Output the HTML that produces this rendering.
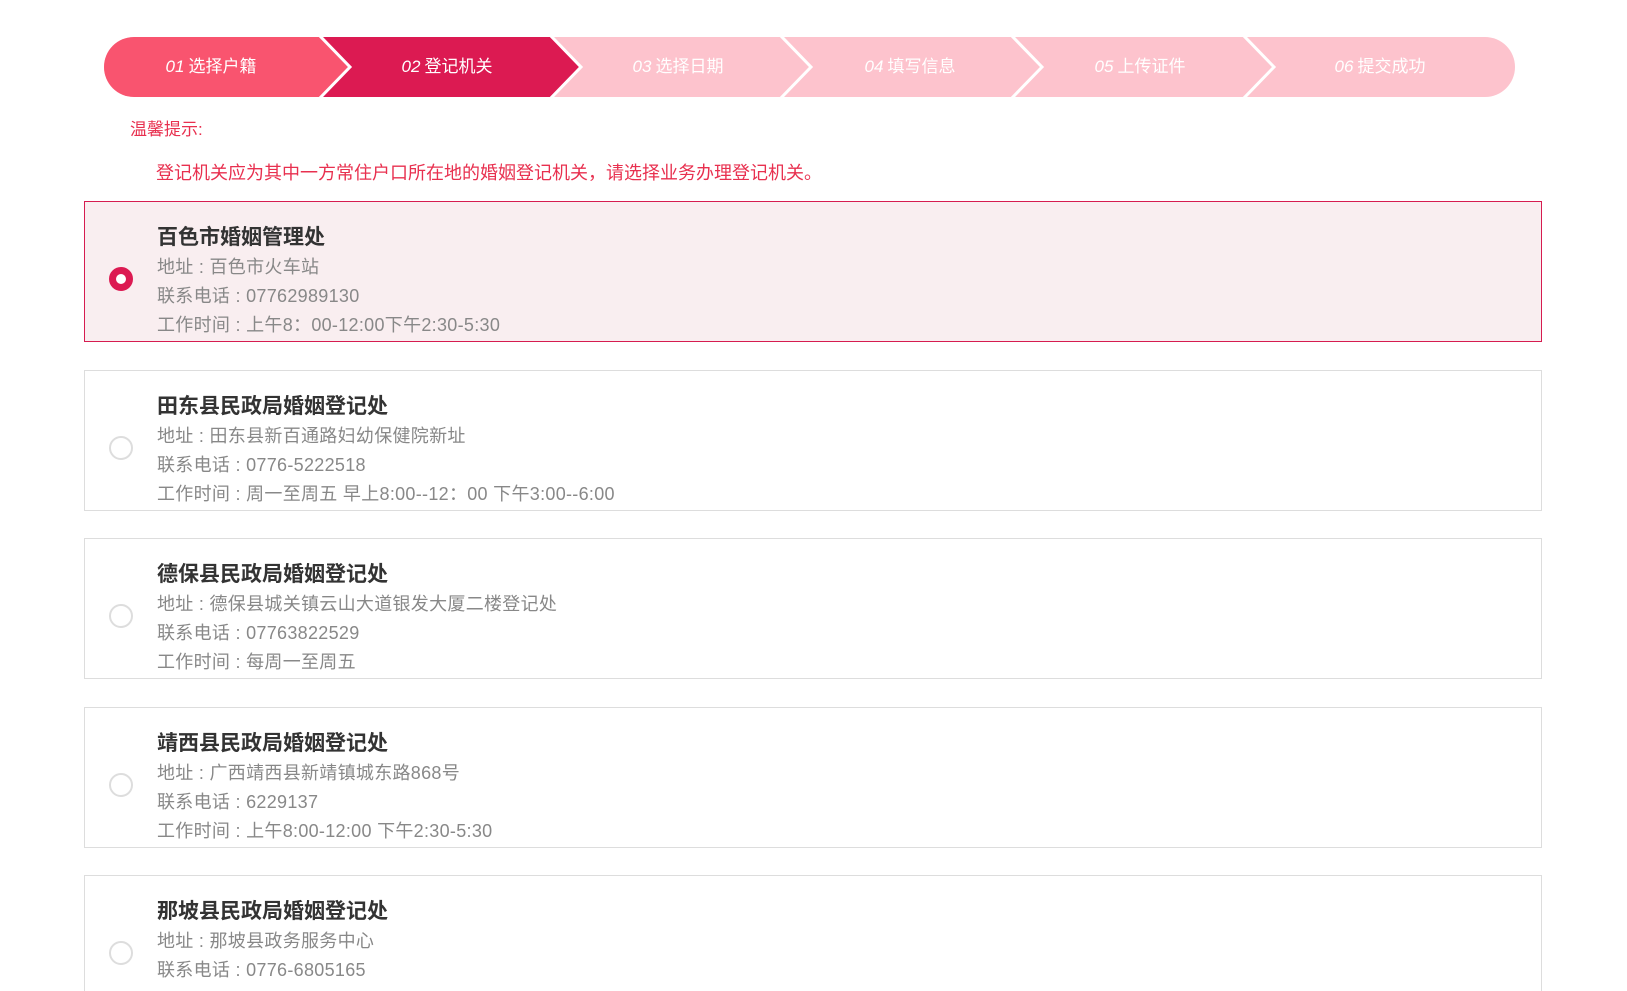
<!DOCTYPE html>
<html><head><meta charset="utf-8"><style>
html,body{margin:0;padding:0;background:#fff;width:1627px;height:990px;overflow:hidden;font-family:"Liberation Sans","Noto Sans CJK SC",sans-serif;}
.bar{position:absolute;left:104px;top:37px;}
.lbl{position:absolute;top:37px;height:60px;line-height:60px;color:#fff;font-size:17px;transform:translateX(-50%);white-space:nowrap;}
.lbl i{margin-right:4px;}
.tip{position:absolute;left:130px;top:115px;color:#e8304f;font-size:17px;}
.note{position:absolute;left:156px;top:159px;color:#e8304f;font-size:18px;}
.card{position:absolute;left:84px;width:1456px;height:139px;border:1px solid #ddd;background:#fff;}
.card.sel{border-color:#d61c50;background:#f9eef0;}
.radio{position:absolute;left:24px;top:65px;width:20px;height:20px;border:2px solid #ddd;border-radius:50%;background:#fff;}
.sel .radio{border:7px solid #dc1a52;width:10px;height:10px;}
.t{position:absolute;left:72px;top:22px;font-size:21px;font-weight:bold;color:#333;line-height:28px;}
.l{position:absolute;left:72px;font-size:18px;color:#888;line-height:26px;letter-spacing:0.3px;}
</style></head><body>
<svg class="bar" width="1411" height="60" viewBox="0 0 1411 60">
<defs><clipPath id="c"><rect x="0" y="0" width="1411" height="60" rx="30"/></clipPath></defs>
<g clip-path="url(#c)">
<rect x="0" y="0" width="1411" height="60" fill="#fdc3cd"/>
<polygon points="0,0 215,0 244,30 215,60 0,60" fill="#f9546f"/>
<polygon points="215,0 446,0 475,30 446,60 215,60 244,30" fill="#dc1a52"/>
<g fill="none" stroke="#fff" stroke-width="3">
<polyline points="215,-2 246,30 215,62"/>
<polyline points="446,-2 477,30 446,62"/>
<polyline points="676,-2 707,30 676,62"/>
<polyline points="907,-2 938,30 907,62"/>
<polyline points="1139,-2 1170,30 1139,62"/>
</g></g></svg>
<div class="lbl" style="left:211px"><i>01</i>选择户籍</div>
<div class="lbl" style="left:447px"><i>02</i>登记机关</div>
<div class="lbl" style="left:678px"><i>03</i>选择日期</div>
<div class="lbl" style="left:910px"><i>04</i>填写信息</div>
<div class="lbl" style="left:1140px"><i>05</i>上传证件</div>
<div class="lbl" style="left:1380px"><i>06</i>提交成功</div>
<div class="tip">温馨提示:</div>
<div class="note">登记机关应为其中一方常住户口所在地的婚姻登记机关，请选择业务办理登记机关。</div>

<div class="card sel" style="top:201px"><div class="radio"></div>
<div class="t">百色市婚姻管理处</div>
<div class="l" style="top:52px">地址 : 百色市火车站</div>
<div class="l" style="top:81px">联系电话 : 07762989130</div>
<div class="l" style="top:110px">工作时间 : 上午8：00-12:00下午2:30-5:30</div></div>

<div class="card" style="top:370px"><div class="radio"></div>
<div class="t">田东县民政局婚姻登记处</div>
<div class="l" style="top:52px">地址 : 田东县新百通路妇幼保健院新址</div>
<div class="l" style="top:81px">联系电话 : 0776-5222518</div>
<div class="l" style="top:110px">工作时间 : 周一至周五 早上8:00--12：00 下午3:00--6:00</div></div>

<div class="card" style="top:538px"><div class="radio"></div>
<div class="t">德保县民政局婚姻登记处</div>
<div class="l" style="top:52px">地址 : 德保县城关镇云山大道银发大厦二楼登记处</div>
<div class="l" style="top:81px">联系电话 : 07763822529</div>
<div class="l" style="top:110px">工作时间 : 每周一至周五</div></div>

<div class="card" style="top:707px"><div class="radio"></div>
<div class="t">靖西县民政局婚姻登记处</div>
<div class="l" style="top:52px">地址 : 广西靖西县新靖镇城东路868号</div>
<div class="l" style="top:81px">联系电话 : 6229137</div>
<div class="l" style="top:110px">工作时间 : 上午8:00-12:00 下午2:30-5:30</div></div>

<div class="card" style="top:875px;border-bottom:none;height:115px;overflow:hidden"><div class="radio"></div>
<div class="t">那坡县民政局婚姻登记处</div>
<div class="l" style="top:52px">地址 : 那坡县政务服务中心</div>
<div class="l" style="top:81px">联系电话 : 0776-6805165</div></div>
</body></html>
